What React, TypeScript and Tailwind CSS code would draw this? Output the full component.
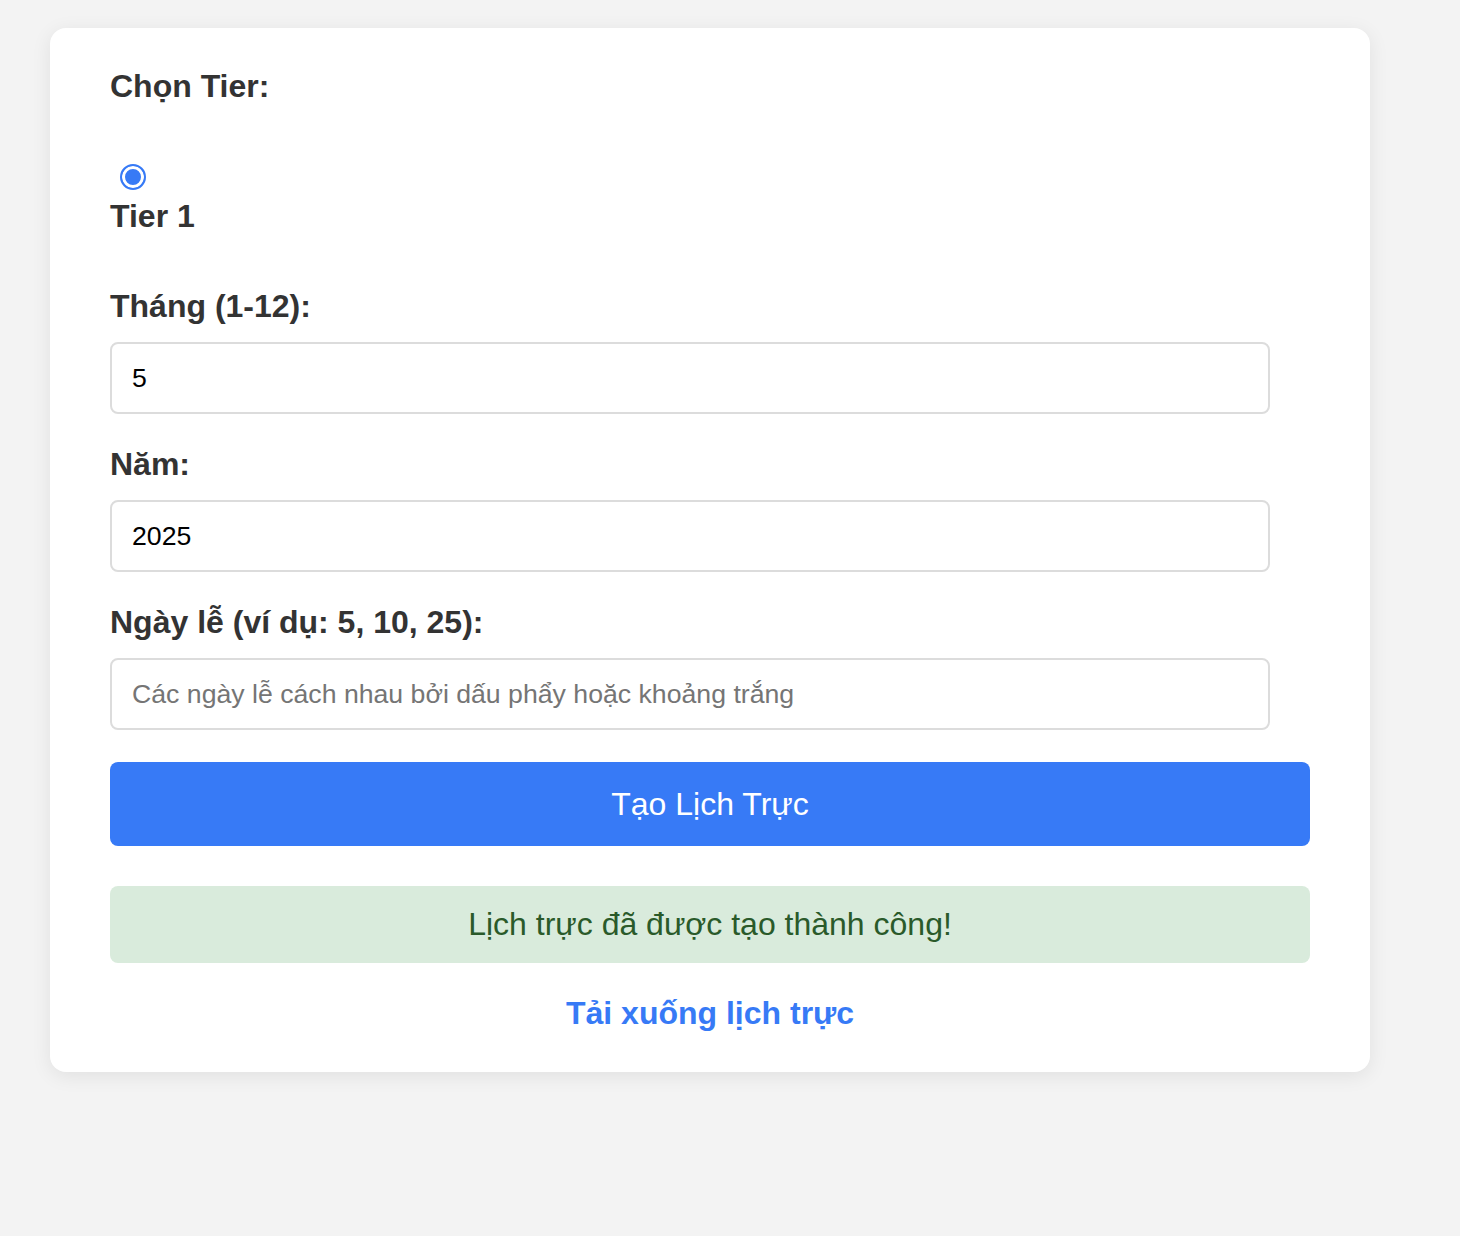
export default function App() {
  const labelCls = "block text-[32px] leading-[39px] font-bold text-[#333]";
  const inputCls =
    "block w-[1160px] h-[72px] px-[20px] border-2 border-[#dcdcdc] rounded-lg text-[26.67px] text-black placeholder:text-[#757575] outline-none bg-white";

  return (
    <div
      className="min-h-screen bg-[#f3f3f3] pt-[28px] pl-[50px]"
      style={{ fontFamily: '"Liberation Sans", Arial, sans-serif' }}
    >
      <div className="w-[1320px] bg-white rounded-2xl shadow-[0_4px_20px_rgba(0,0,0,0.08)] px-[60px] pt-[39px] pb-[40px]">
        {/* Tier */}
        <label className={labelCls}>Chọn Tier:</label>
        <input
          type="radio"
          name="tier"
          defaultChecked
          className="block mt-[58px] ml-[10px] w-[26px] h-[26px] appearance-none rounded-full border-2 border-[#377af6] bg-[#377af6] shadow-[inset_0_0_0_3px_white]"
        />
        <label className={`${labelCls} mt-[7px]`}>Tier 1</label>

        {/* Month */}
        <label className={`${labelCls} mt-[51px]`}>Tháng (1-12):</label>
        <input type="number" defaultValue="5" className={`${inputCls} mt-[16px]`} />

        {/* Year */}
        <label className={`${labelCls} mt-[31px]`}>Năm:</label>
        <input type="number" defaultValue="2025" className={`${inputCls} mt-[16px]`} />

        {/* Holidays */}
        <label className={`${labelCls} mt-[31px]`}>Ngày lễ (ví dụ: 5, 10, 25):</label>
        <input
          type="text"
          placeholder="Các ngày lễ cách nhau bởi dấu phẩy hoặc khoảng trắng"
          className={`${inputCls} mt-[16px]`}
        />

        <button className="mt-[32px] w-full h-[84px] rounded-lg bg-[#377af6] text-white text-[32px] leading-[37px]">
          Tạo Lịch Trực
        </button>

        <div className="mt-[40px] h-[77px] rounded-lg bg-[#d9ebdc] text-[#2a5a2a] text-[32px] leading-[37px] flex items-center justify-center">
          Lịch trực đã được tạo thành công!
        </div>

        <a
          href="#"
          className="block mt-[32px] text-center text-[32px] leading-[37px] font-bold text-[#377af6]"
        >
          Tải xuống lịch trực
        </a>
      </div>
    </div>
  );
}
